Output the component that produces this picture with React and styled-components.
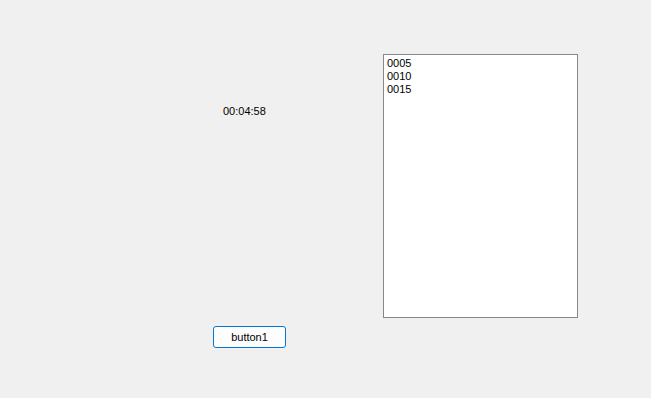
import React from 'react';
import styled, { createGlobalStyle } from 'styled-components';

const GlobalStyle = createGlobalStyle`
  html, body {
    margin: 0;
    padding: 0;
    background: #f0f0f0;
  }
  body {
    font-family: "Liberation Sans", Arial, sans-serif;
    font-size: 11px;
    color: #000;
  }
`;

const items = ['0005', '0010', '0015'];

const App = () => {
  return (
    <>
      <GlobalStyle />
      <S_form>
        <S_leftColumn>
          <S_timeLabel>00:04:58</S_timeLabel>
          <S_button type='button'>button1</S_button>
        </S_leftColumn>
        <S_listBox>
          {items.map((item) => (
            <S_listItem key={item}>{item}</S_listItem>
          ))}
        </S_listBox>
      </S_form>
    </>
  );
};

export default App;

const S_form = styled.div`
  width: 651px;
  height: 398px;
  box-sizing: border-box;
  padding: 54px 0 0 213px;
  display: grid;
  grid-template-columns: 73px 195px;
  column-gap: 97px;
  align-items: start;
  background: #f0f0f0;
`;

const S_leftColumn = styled.div`
  height: 294px;
  display: flex;
  flex-direction: column;
`;

const S_timeLabel = styled.span`
  margin: 51px 0 0 10px;
  line-height: 13px;
  white-space: nowrap;
`;

const S_button = styled.button`
  margin-top: auto;
  width: 73px;
  height: 22px;
  box-sizing: border-box;
  padding: 0;
  border: 1px solid #0078d7;
  border-radius: 3px;
  background: #fdfdfd;
  font-family: "Liberation Sans", Arial, sans-serif;
  font-size: 11px;
  color: #000;
`;

const S_listBox = styled.div`
  height: 264px;
  box-sizing: border-box;
  border: 1px solid #828790;
  background: #fff;
  padding: 2px 3px;
  display: flex;
  flex-direction: column;
`;

const S_listItem = styled.div`
  line-height: 13px;
  height: 13px;
  color: #000;
`;
